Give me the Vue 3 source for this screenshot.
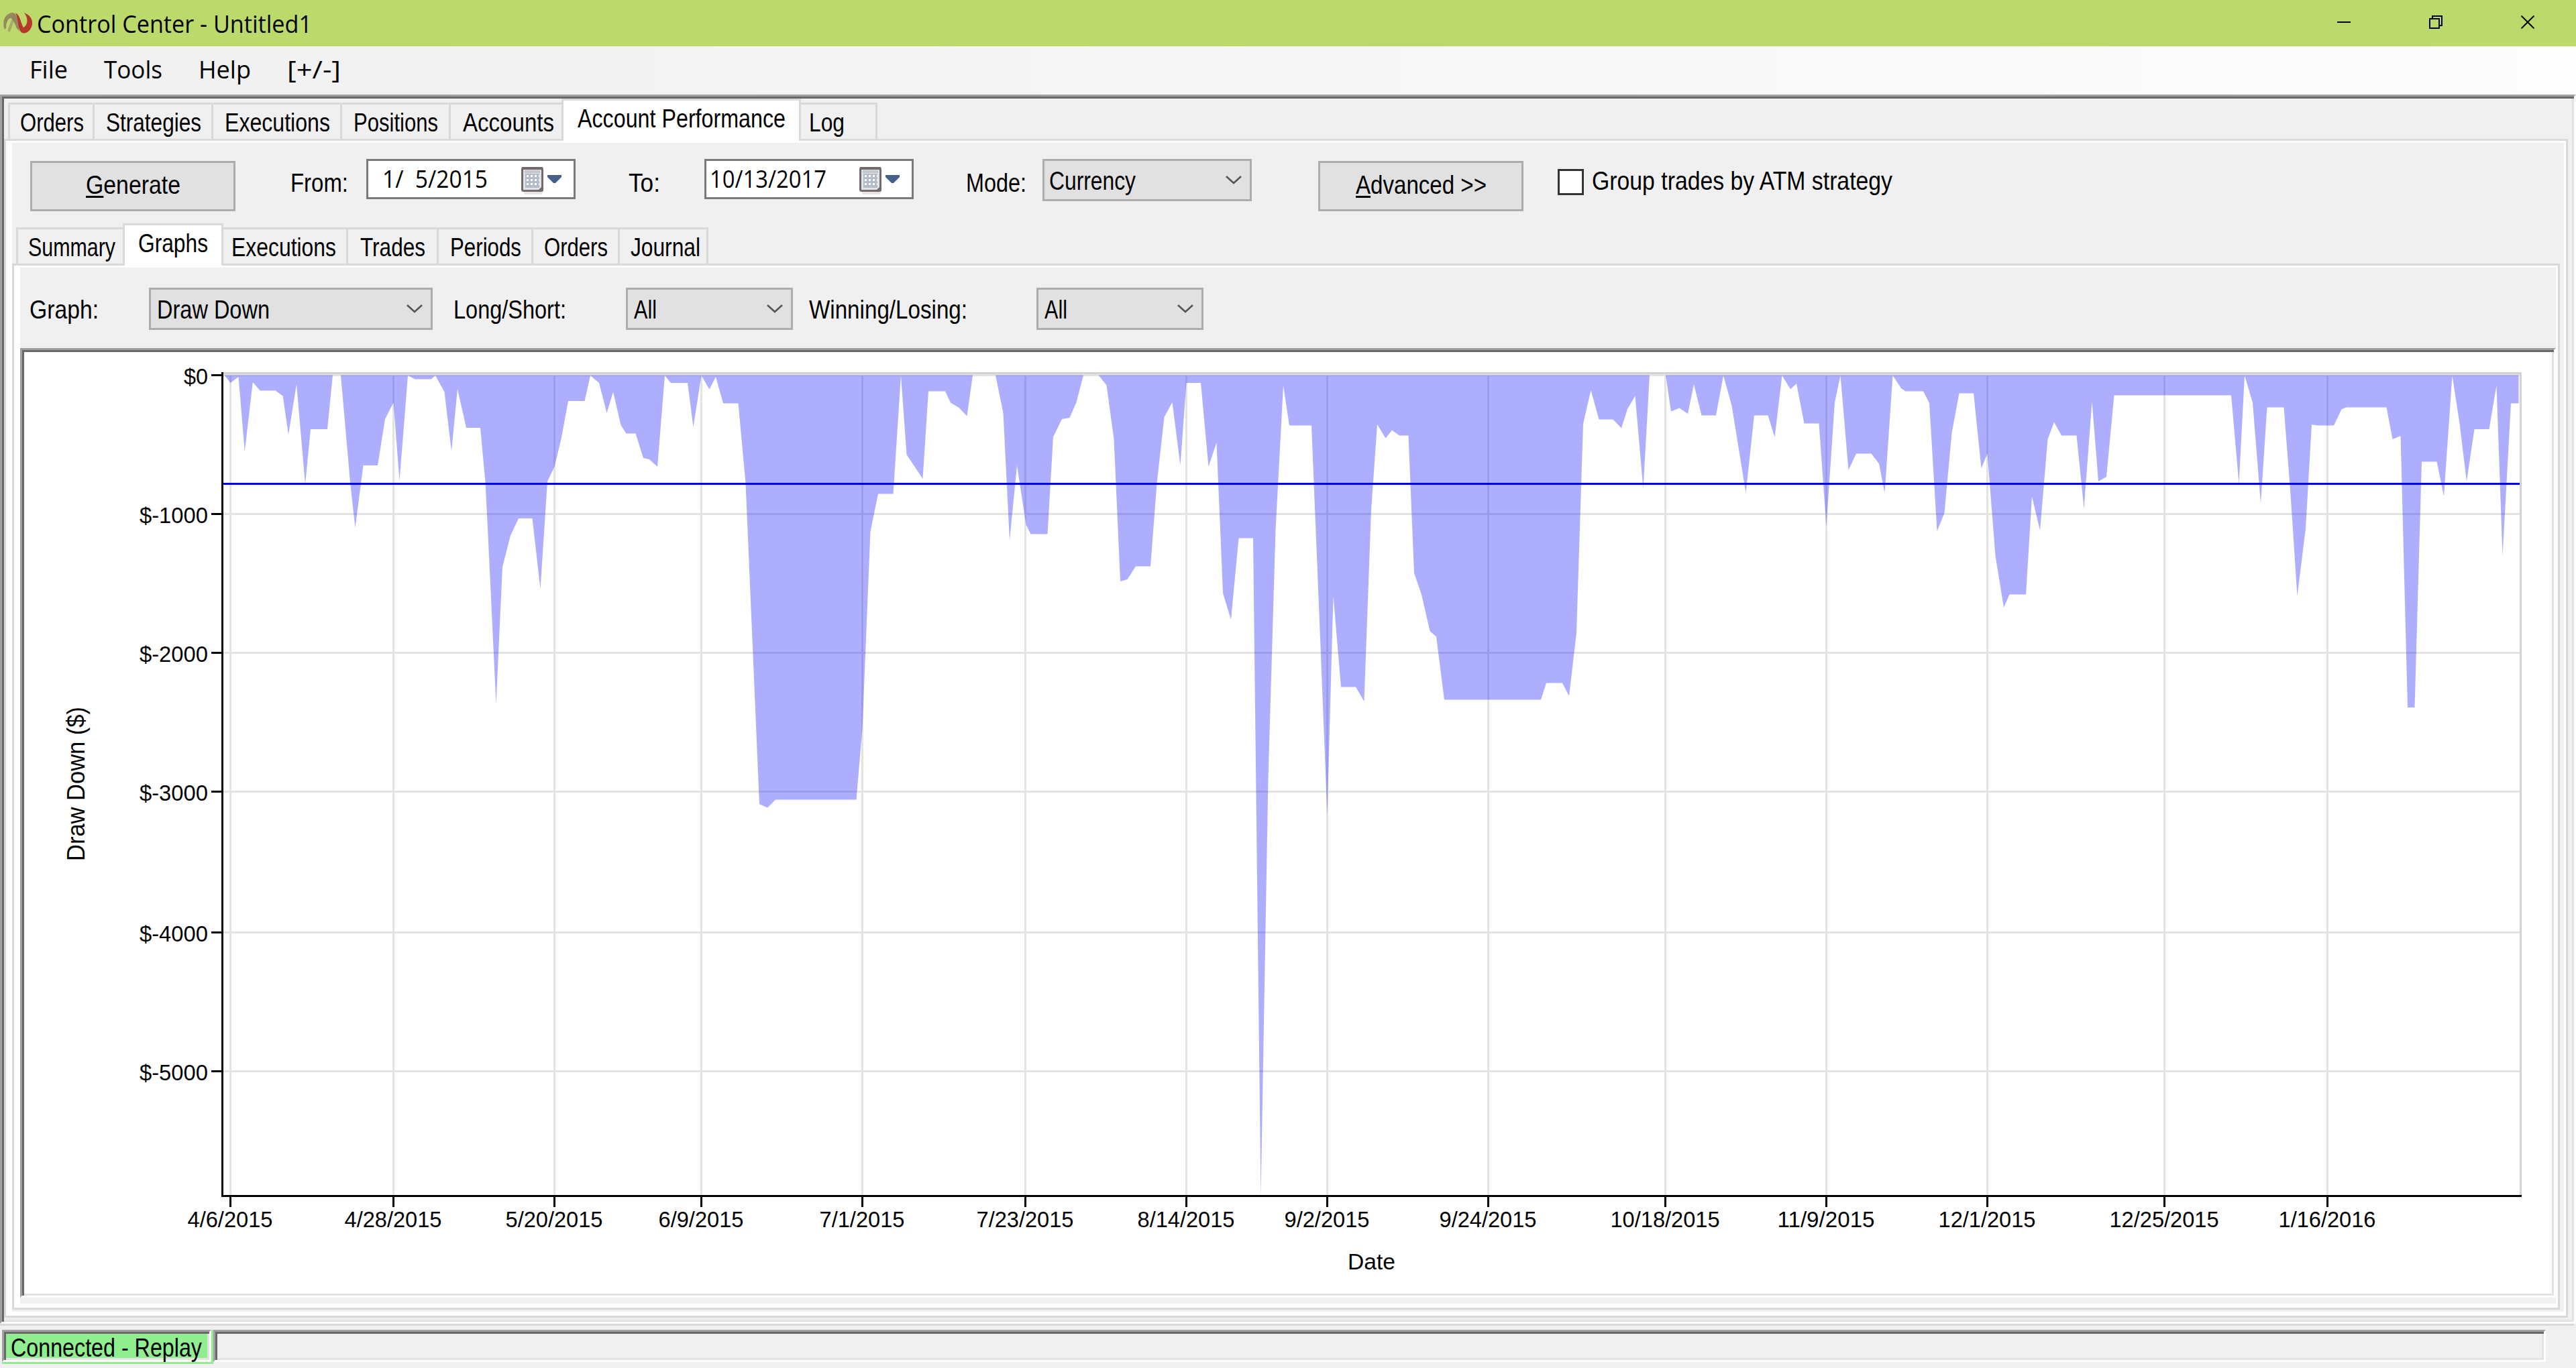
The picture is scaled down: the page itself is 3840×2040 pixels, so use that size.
<template>
  <div class="window">
    <header class="titlebar">
      <svg class="logo" width="46" height="38" viewBox="0 0 46 38">
        <path d="M4 29 C-1 17 5 5 15 4 C23 4 23 14 26 31 C20 28 18 13 13 12 C8 13 6 20 6 27 Z" fill="#8f7a5c" opacity="0.85" />
        <path d="M20 4 C28 8 28 21 32 26 C38 23 40 13 33 4 C44 8 48 18 43 27 C39 35 30 37 27 31 C23 23 24 12 20 4 Z" fill="#b5382a" />
        <path d="M10 32 C13 24 16 15 19 8" fill="none" stroke="#8f7a5c" stroke-width="4" opacity="0.5" />
      </svg>
      <span v-fit="411" class="title">Control Center - Untitled1</span>
      <div class="window-controls">
        <svg width="20" height="20" viewBox="0 0 20 20"><path d="M0 10H20" /></svg>
        <svg width="20" height="20" viewBox="0 0 20 20">
          <path d="M1 5H15V19H1ZM5 5V1H19V15H15" />
        </svg>
        <svg width="20" height="20" viewBox="0 0 20 20"><path d="M0.5 0.5L19.5 19.5M19.5 0.5L0.5 19.5" /></svg>
      </div>
    </header>

    <nav class="menubar">
      <span v-for="m in menu" :key="m.label" v-fit="m.w">{{ m.label }}</span>
    </nav>

    <main class="frame sunken">
      <div class="tabs">
        <div
          v-for="t in mainTabs"
          :key="t.label"
          class="tab"
          :class="{ active: t.active, last: t.last }"
          :style="{ width: t.width + 'px', paddingLeft: t.pad && t.pad + 'px' }"
        >
          <span v-fit="t.w">{{ t.label }}</span>
        </div>
      </div>

      <section class="pane">
        <div class="toolbar">
          <button class="btn generate"><span v-fit="142"><u>G</u>enerate</span></button>
          <span v-fit="87" class="label from">From:</span>
          <div class="date first">
            <span v-fit="158">1/&nbsp; 5/2015</span>
            <svg class="picker" width="60" height="54" viewBox="0 0 60 54">
              <use href="#calendar" />
            </svg>
          </div>
          <span v-fit="48" class="label to">To:</span>
          <div class="date second">
            <span v-fit="175">10/13/2017</span>
            <svg class="picker" width="60" height="54" viewBox="0 0 60 54">
              <g id="calendar">
                <rect x="4" y="42" width="28" height="8" rx="3" fill="#e9e5e4" />
                <rect x="1.5" y="10.5" width="30" height="34" rx="2" fill="#dfe3ea" stroke="#75696a" stroke-width="3" />
                <rect x="1" y="9" width="31" height="4" fill="#75696a" />
                <rect x="5" y="14" width="23" height="4" fill="#c4c8cc" />
                <rect x="6" y="19" width="21" height="21" fill="#b4bbc8" />
                <path d="M8 22.5H27M8 28.5H27M8 34.5H27" stroke="#fff" stroke-width="3" stroke-dasharray="3 3" />
                <path d="M24 45L33 36V45Z" fill="#75696a" />
                <path d="M39 21H60V24L51 33H48L39 24Z" fill="#47608a" />
              </g>
            </svg>
          </div>
          <span v-fit="91" class="label mode">Mode:</span>
          <div class="select currency">
            <span v-fit="130">Currency</span>
            <svg width="24" height="13" viewBox="0 0 24 13"><path d="M1 1L12 11L23 1" /></svg>
          </div>
          <button class="btn advanced"><span v-fit="196"><u>A</u>dvanced &gt;&gt;</span></button>
          <i class="checkbox" />
          <span v-fit="449" class="label group">Group trades by ATM strategy</span>
        </div>

        <div class="tabs">
          <div
            v-for="t in reportTabs"
            :key="t.label"
            class="tab"
            :class="{ active: t.active }"
            :style="{
              width: t.width + 'px',
              paddingLeft: t.pad && t.pad + 'px',
              paddingRight: t.padRight && t.padRight + 'px',
            }"
          >
            <span v-fit="t.w">{{ t.label }}</span>
          </div>
        </div>

        <section class="pane">
          <div class="filters">
            <span v-fit="104" class="label">Graph:</span>
            <div class="select graph">
              <span v-fit="169">Draw Down</span>
              <svg width="24" height="13" viewBox="0 0 24 13"><path d="M1 1L12 11L23 1" /></svg>
            </div>
            <span v-fit="169" class="label long">Long/Short:</span>
            <div class="select side">
              <span v-fit="35">All</span>
              <svg width="24" height="13" viewBox="0 0 24 13"><path d="M1 1L12 11L23 1" /></svg>
            </div>
            <span v-fit="237" class="label winning">Winning/Losing:</span>
            <div class="select outcome">
              <span v-fit="35">All</span>
              <svg width="24" height="13" viewBox="0 0 24 13"><path d="M1 1L12 11L23 1" /></svg>
            </div>
          </div>

          <div class="chart sunken">
            <svg width="3768" height="1404" viewBox="36 525 3768 1404">
              <g class="grid">
                <line v-for="t in yTicks" :key="t.label" x1="333" x2="3756" :y1="t.y" :y2="t.y" />
                <line v-for="t in xTicks" :key="t.label" :x1="t.x" :x2="t.x" y1="561" y2="1782" />
              </g>
              <polygon class="area" :points="area" />
              <path class="plot-edge" d="M333 556.5H3757.5V1782" />
              <line class="average" x1="333" x2="3756" y1="721.5" y2="721.5" />
              <path class="axis" d="M331.5 555V1783.5H3759" />
              <g class="axis">
                <line v-for="t in yTicks" :key="t.label" x1="315" x2="330" :y1="t.y" :y2="t.y" />
                <line v-for="t in xTicks" :key="t.label" :x1="t.x" :x2="t.x" y1="1785" y2="1800" />
              </g>
              <text
                v-for="t in yTicks"
                :key="t.label"
                x="310"
                :y="t.y + 13.5"
                text-anchor="end"
                :textLength="t.w"
                lengthAdjust="spacingAndGlyphs"
              >{{ t.label }}</text>
              <text
                v-for="t in xTicks"
                :key="t.label"
                :x="t.x - 0.5"
                y="1830"
                text-anchor="middle"
                :textLength="t.label.length * 18 - 17"
                lengthAdjust="spacingAndGlyphs"
              >{{ t.label }}</text>
              <text x="2009" y="1893" textLength="71" lengthAdjust="spacingAndGlyphs">Date</text>
              <text
                transform="translate(126 1284) rotate(-90)"
                class="axis-title"
                textLength="230"
                lengthAdjust="spacingAndGlyphs"
              >Draw Down ($)</text>
            </svg>
          </div>
        </section>
      </section>
    </main>

    <footer class="statusbar">
      <div class="connection">
        <div class="sunken"><span v-fit="286">Connected - Replay</span></div>
      </div>
      <div class="message sunken" />
    </footer>
  </div>
</template>

<script setup>
// squeezes a label horizontally so that it takes exactly the given width
const vFit = {
  mounted(el, { value }) {
    const natural = el.getBoundingClientRect().width;
    el.style.transform = `translate(1px, 1px) scaleX(${(value - 1) / natural})`;
    el.style.marginRight = `${value - natural}px`;
  },
};

const menu = [
  { label: 'File', w: 58 },
  { label: 'Tools', w: 88 },
  { label: 'Help', w: 79 },
  { label: '[+/-]', w: 81 },
];

const mainTabs = [
  { label: 'Orders', width: 129, w: 96 },
  { label: 'Strategies', width: 177, w: 143 },
  { label: 'Executions', width: 192, w: 158 },
  { label: 'Positions', width: 162, w: 127 },
  { label: 'Accounts', width: 165, w: 137, pad: 5 },
  { label: 'Account Performance', width: 357, w: 311, active: true },
  { label: 'Log', width: 114, w: 54, last: true },
];

const reportTabs = [
  { label: 'Summary', width: 159, w: 131, pad: 2 },
  { label: 'Graphs', width: 150, w: 105, active: true, padRight: 2 },
  { label: 'Executions', width: 186, w: 157, padRight: 5 },
  { label: 'Trades', width: 135, w: 98 },
  { label: 'Periods', width: 141, w: 107 },
  { label: 'Orders', width: 129, w: 96 },
  { label: 'Journal', width: 132, w: 105, pad: 5 },
];

const yTicks = [
  { label: '$0', y: 559.5, w: 36 },
  { label: '$-1000', y: 766.5, w: 102 },
  { label: '$-2000', y: 973.5, w: 102 },
  { label: '$-3000', y: 1180.5, w: 102 },
  { label: '$-4000', y: 1390.5, w: 102 },
  { label: '$-5000', y: 1597.5, w: 102 },
];

const xTicks = [
  { label: '4/6/2015', x: 343.5 },
  { label: '4/28/2015', x: 586.5 },
  { label: '5/20/2015', x: 826.5 },
  { label: '6/9/2015', x: 1045.5 },
  { label: '7/1/2015', x: 1285.5 },
  { label: '7/23/2015', x: 1528.5 },
  { label: '8/14/2015', x: 1768.5 },
  { label: '9/2/2015', x: 1978.5 },
  { label: '9/24/2015', x: 2218.5 },
  { label: '10/18/2015', x: 2482.5 },
  { label: '11/9/2015', x: 2722.5 },
  { label: '12/1/2015', x: 2962.5 },
  { label: '12/25/2015', x: 3226.5 },
  { label: '1/16/2016', x: 3469.5 },
];

const area = `
  334.5,559.5 343.5,571 355.5,562 364.8,673 376.8,570 387.7,582.5 410.7,582.5 421.6,590.5
  430,648 442,573 455,722 463,640 488,640 496,559.5 508,559.5 522,719 529.5,787 541.5,694
  563,694 574,625 586.5,600.5 595.5,717 608,560 618.5,565.5 642.5,565.5 649,560 662.5,584.5
  673,673 682,580 695,638 716,638 723.5,719 727,788 739.5,1050 749,845.5 761,798.5 773,773
  793.5,773 805.5,878 816,718 826.5,696 837,652.5 847,598 871.5,598 880,560 893,571
  904.5,616 914,584.5 925.5,634 933.5,646.5 947.5,646.5 959,683 968,685 980,696 991,560
  1000,571 1025,571 1033.5,637 1045.5,560 1057.5,580.5 1067,562 1078,601.5 1100.5,601.5
  1111.5,721 1132,1199 1144,1204.5 1156,1192.5 1276.5,1192.5 1285.5,1086.5 1297.5,792.5
  1309,736.5 1331.5,736.5 1343,560 1351.5,678 1375.5,714 1384,583.5 1409,583.5 1417,600.5
  1429.5,608 1441.5,620.5 1450,559.5 1484,559.5 1495.5,616 1505,806 1516,694 1529.5,782.5
  1536.5,796.5 1561.5,796.5 1570,651.5 1583,625 1594.5,623 1604.5,600 1615,559.5 1637.5,559.5
  1649.5,574.5 1660.5,655 1670,867 1680.5,864 1693,844.5 1715,844.5 1724.5,721 1735.5,622
  1747.5,600 1759.5,694 1768.5,571 1790,571 1801.5,696 1813.5,660 1823,884.5 1835,924
  1846.5,802.5 1868,802.5 1879.5,1782 1890.5,1161 1901.5,790 1913,575 1922,634.5 1955,634.5
  1967.5,939.5 1978.5,1216 1987.5,889 1999,1024.5 2021,1024.5 2033.5,1046 2044,760.5
  2053,633 2065.5,653.5 2075,641.5 2086,649.5 2099.5,649.5 2108,854.5 2119,886.5
  2131.5,941 2141,949.5 2153,1043.5 2297,1043.5 2305,1018.5 2329,1018.5 2339,1038 2350,944
  2360,632 2371.5,582 2383.5,625.5 2404.5,625.5 2417,638.5 2426,610 2437.5,590.5 2449.5,729
  2459,559.5 2483,559.5 2491,613.5 2503.5,608.5 2516,617 2525,573 2536.5,619.5 2558,619.5
  2569,560 2581.5,605 2602.5,735 2615,619.5 2635.5,619.5 2645.5,652 2656.5,560
  2669,580.5 2678,572 2689.5,631.5 2711.5,631.5 2722.5,785 2735,600 2743.5,560
  2755.5,701 2767,676.5 2789.5,676.5 2801,691.5 2809.5,735 2821.5,560 2834,579
  2840.5,583.5 2867,583.5 2876,601 2887.5,792 2898.5,765 2909.5,645.5 2920.5,586.5 2942,586.5
  2953.5,698.5 2962.5,676.5 2974.5,829 2987,906 2995.5,886.5 3020,886.5 3029,740.5 3041,791
  3052.5,655 3062,629.5 3073,649.5 3095.5,649.5 3106.5,758 3118.5,599 3128,718
  3140,711 3151.5,589.5 3326,589.5 3337.5,721 3346,560 3358,600.5 3370,751 3379.5,607.5
  3404.5,607.5 3414.5,737.5 3424.5,889 3437,788 3446,633 3454,634.5 3479,634.5
  3490.5,610.5 3497.5,607.5 3557.5,607.5 3566.5,655 3578.5,650 3589,1055 3599.5,1055
  3610,688.5 3632.5,688.5 3643,740 3655.5,560 3666.5,632 3677,718 3688.5,640 3710.5,640
  3721.5,575 3730.5,829 3743,601.5 3754.5,601.5 3754.5,559.5
`.trim();
</script>

<style>
body {
  margin: 0;
  background: #f0f0f0;
}
</style>

<style scoped>
.window {
  display: flex;
  flex-direction: column;
  width: 3840px;
  height: 2040px;
  overflow: hidden;
  background: #f0f0f0;
  color: #000;
  font-family: "Liberation Sans", Arial, sans-serif;
  font-size: 39px;
}

span {
  display: inline-block;
  flex: none;
  white-space: pre;
  transform-origin: 0 50%;
}

.window * {
  box-sizing: border-box;
}

.titlebar {
  display: flex;
  height: 69px;
  flex: none;
  background: #bcda6c;
}

.logo {
  margin: 15px 5px 0 3px;
}

.title {
  font: 36px/69px "Open Sans", "Noto Sans", sans-serif;
}

.window-controls {
  display: flex;
  margin: 23px 62px 0 auto;
  gap: 117px;
}

.window-controls svg {
  fill: none;
  stroke: #000;
  stroke-width: 2;
}

.menubar {
  display: flex;
  gap: 53px;
  height: 72px;
  flex: none;
  padding-left: 43px;
  background: linear-gradient(90deg, #f0f0f0, #fdfdfd);
  font: 37px/66px "Open Sans", "Noto Sans", sans-serif;
}

/* classic two-tone inset edge */
.sunken {
  border: 3px solid;
  border-color: #a0a0a0 #fff #fff #a0a0a0;
  box-shadow: inset 3px 3px #696969, inset -3px -3px #e3e3e3;
  padding: 3px;
}

.frame {
  height: 1833px;
  flex: none;
  display: flex;
  flex-direction: column;
}

.frame.sunken {
  padding-left: 3px;
}

.tabs {
  display: flex;
  height: 60px;
  flex: none;
  padding-left: 6px;
}

.tab {
  display: flex;
  justify-content: center;
  flex: none;
  height: 54px;
  margin-top: 6px;
  border: solid #d9d9d9;
  border-width: 3px 3px 0 0;
  line-height: 51px;
}

.tab:first-child {
  border-left-width: 3px;
}

.tab:has(+ .active) {
  border-right-width: 0;
}

.tab.active {
  position: relative;
  z-index: 1;
  height: 66px;
  margin-top: 0;
  border-width: 3px 3px 0;
  background: #fff;
  clip-path: inset(0 0 3px 0);
}

.tab.last {
  justify-content: flex-start;
  padding-left: 11px;
}

.pane {
  display: flex;
  flex-direction: column;
  flex: 1;
  min-height: 0;
  margin: 0 6px 3px 0;
  border: 3px solid #d9d9d9;
  background: #f0f0f0;
  box-shadow: inset 9px 3px #fff, inset -3px -6px #fff;
  padding: 3px 3px 6px 9px;
}

.toolbar,
.filters {
  display: flex;
  align-items: flex-start;
  flex: none;
  height: 120px;
}

.label {
  line-height: 45px;
  margin-top: 36px;
}

.btn {
  flex: none;
  width: 306px;
  height: 75px;
  margin-top: 27px;
  padding: 0 0 6px;
  border: 3px solid #adadad;
  background: #e1e1e1;
  color: inherit;
  font: inherit;
  line-height: 63px;
}

.btn span {
  line-height: 63px;
}

.btn u {
  text-decoration-thickness: 3px;
  text-underline-offset: 3px;
}

.generate {
  margin-left: 27px;
}

.from {
  margin-left: 81px;
}

.date {
  display: flex;
  flex: none;
  width: 312px;
  height: 60px;
  margin-top: 24px;
  padding-right: 18px;
  border: 3px solid #7a7a7a;
  background: #fff;
  font: 37px/49px "Open Sans", "Noto Sans", sans-serif;
}

.date.first {
  margin-left: 27px;
  padding-left: 20px;
}

.date.second {
  margin-left: 66px;
  padding-left: 4px;
}

.picker {
  flex: none;
  margin-left: auto;
}

.to {
  margin-left: 78px;
}

.mode {
  margin-left: 77px;
}

.select {
  display: flex;
  align-items: center;
  justify-content: space-between;
  flex: none;
  height: 63px;
  padding: 0 12px 0 8px;
  border: 3px solid #adadad;
  background: #e1e1e1;
  line-height: 57px;
}

.select svg {
  fill: none;
  stroke: #555;
  stroke-width: 2.6;
}

.currency {
  width: 312px;
  margin: 24px 0 0 24px;
  padding-left: 6px;
}

.advanced {
  margin-left: 99px;
}

.checkbox {
  flex: none;
  width: 39px;
  height: 39px;
  margin: 39px 11px 0 51px;
  border: 3px solid #333;
  background: #fff;
}

.group {
  margin-top: 33px;
}

.filters {
  padding-left: 13px;
}

.filters .label {
  margin-top: 39px;
}

.filters .select {
  margin-top: 30px;
}

.graph {
  width: 423px;
  margin-left: 75px;
}

.long {
  margin-left: 30px;
}

.side {
  width: 249px;
  margin-left: 89px;
}

.winning {
  margin-left: 23px;
}

.outcome {
  width: 249px;
  margin-left: 103px;
}

.chart {
  height: 1416px;
  flex: none;
  background: #fff;
}

.chart svg {
  display: block;
  font-size: 34px;
}

.grid line {
  stroke: #e3e3e3;
  stroke-width: 3;
}

.area {
  fill: rgba(0, 0, 255, 0.318);
}

.plot-edge {
  fill: none;
  stroke: #d3d3d3;
  stroke-width: 3;
}

.average {
  stroke: #00f;
  stroke-width: 3;
}

.axis {
  fill: none;
  stroke: #000;
  stroke-width: 3;
}

.axis-title {
  font-size: 37px;
}

.statusbar {
  display: flex;
  flex: 1;
  margin-right: 3px;
  padding: 6px 42px 0 3px;
  border-top: 3px solid #d9d9d9;
}

.connection {
  width: 315px;
  height: 51px;
  padding: 0 3px 3px 0;
  background: #90ee90;
}

.connection .sunken {
  height: 48px;
  padding-left: 9px;
  line-height: 39px;
}

.message {
  flex: 1;
  height: 48px;
}
</style>
